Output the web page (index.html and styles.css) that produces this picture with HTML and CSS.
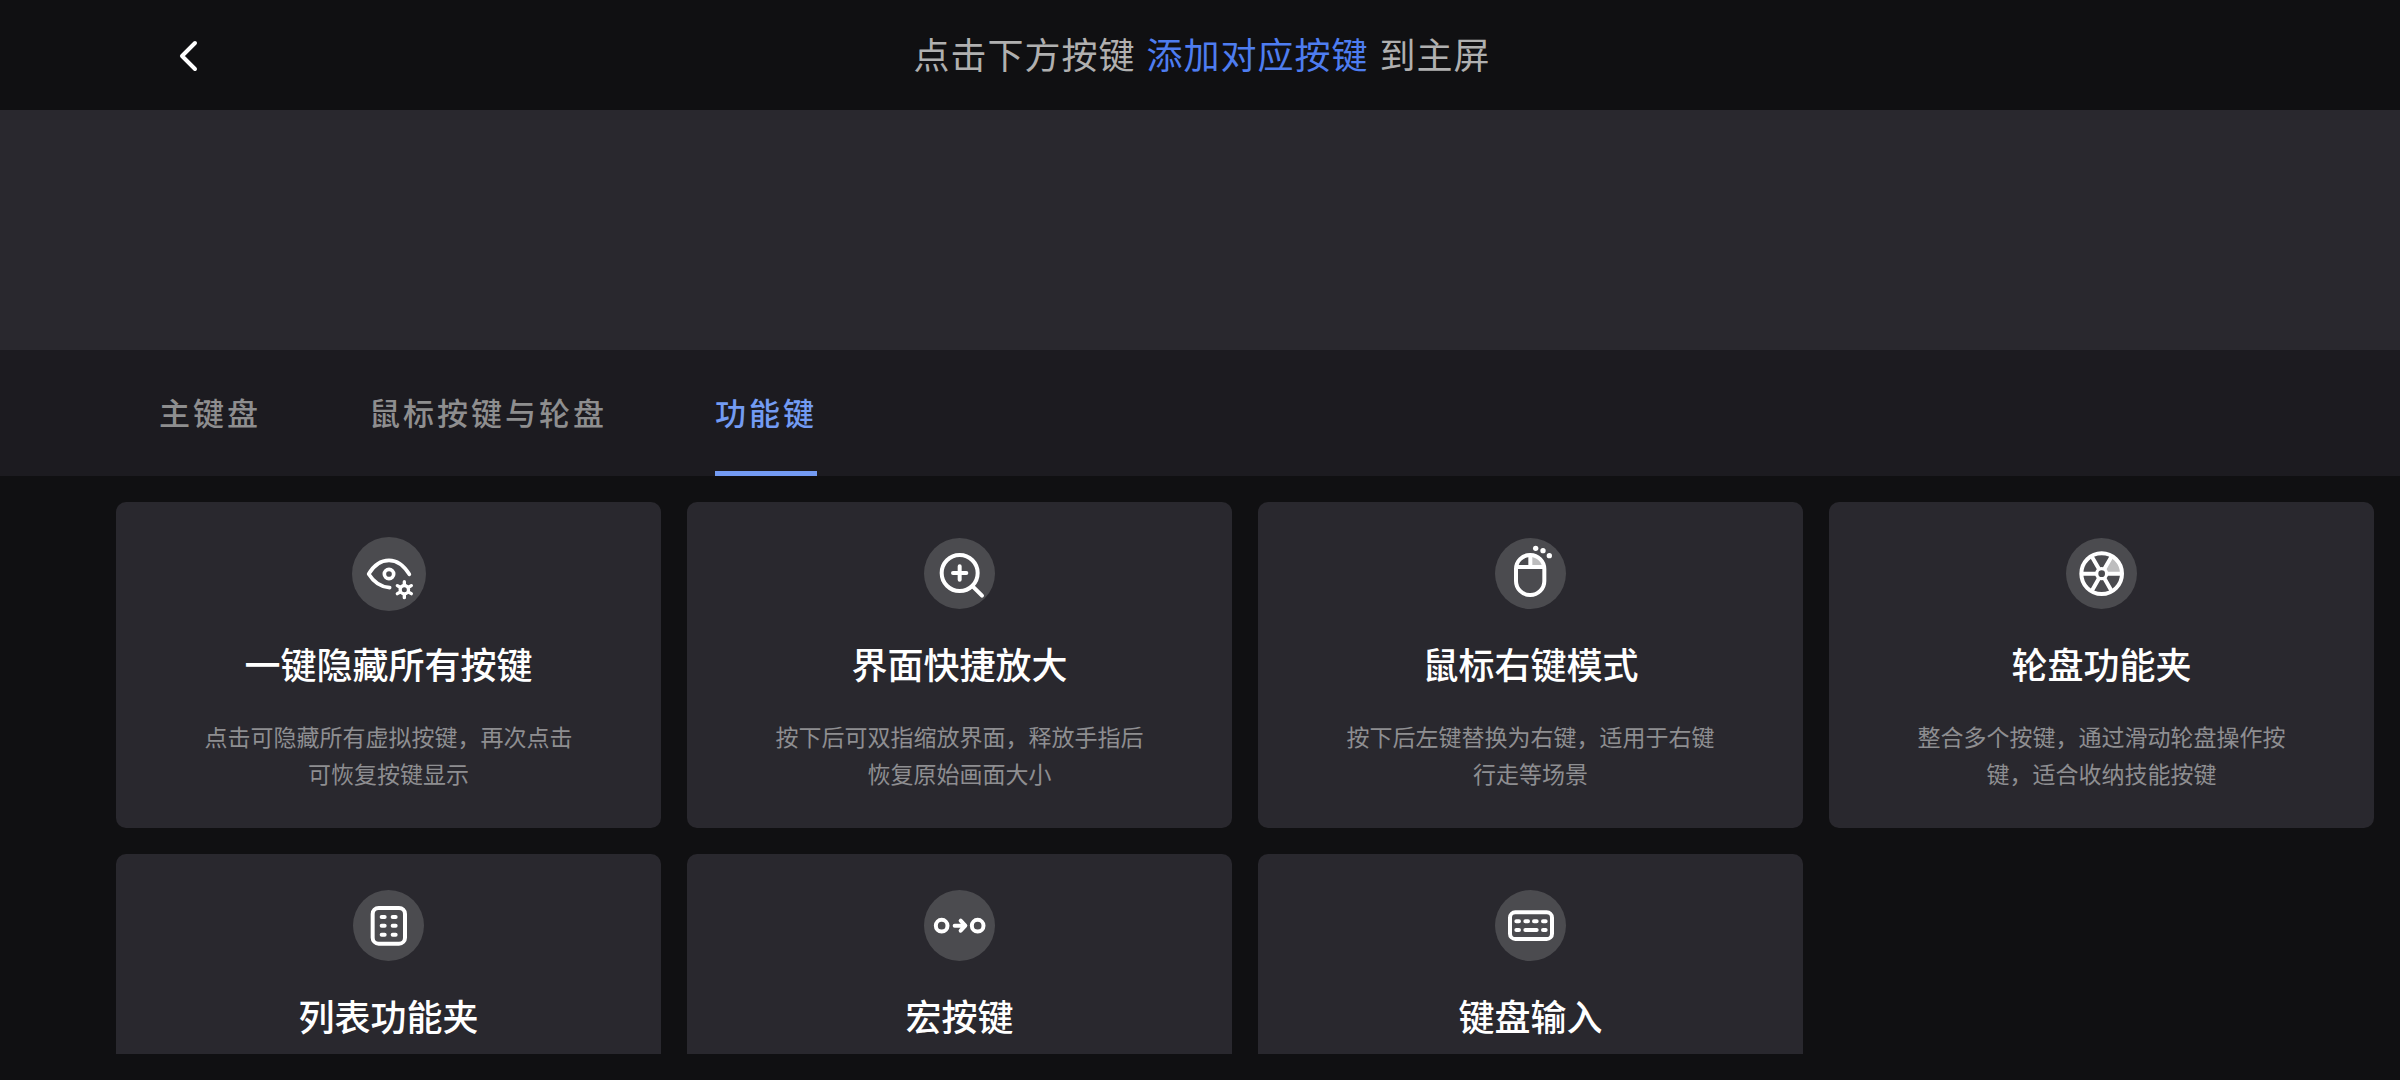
FILE: index.html
```html
<!DOCTYPE html>
<html lang="zh-CN">
<head>
<meta charset="utf-8">
<meta name="viewport" content="width=device-width, initial-scale=1">
<title>添加按键</title>
<link rel="stylesheet" href="styles.css">
</head>
<body>
<header class="topbar">
  <button class="back" type="button" aria-label="返回">
    <svg width="24" height="36" viewBox="0 0 24 36" fill="none" stroke="#fff" stroke-width="4" stroke-linecap="round" stroke-linejoin="round"><path d="M19 6 6 19l13 13"/></svg>
  </button>
  <h1 class="hint">点击下方按键 <span class="hint-accent">添加对应按键</span> 到主屏</h1>
</header>
<section class="preview" aria-label="主屏预览"></section>
<nav class="tabs" role="tablist">
  <button class="tab" type="button" role="tab" aria-selected="false">主键盘</button>
  <button class="tab" type="button" role="tab" aria-selected="false">鼠标按键与轮盘</button>
  <button class="tab tab-active" type="button" role="tab" aria-selected="true">功能键</button>
</nav>
<main class="panel">
  <div class="grid">
    <button class="card" type="button">
      <span class="icon icon-large">
        <svg viewBox="36 48 222 222" fill="none" stroke="#fff" stroke-width="11" stroke-linecap="round" stroke-linejoin="round">
          <path d="M208 160C192 134 170 118 147 118C121 118 100 135 86 159C101 183 120 198 149 200"/>
          <circle cx="147" cy="159" r="14"/>
          <circle cx="193" cy="206" r="12.500" stroke-width="10"/>
          <path stroke-width="10" d="M193 190v-8M193 222v8M179 198l-7-4M207 198l7-4M179 214l-7 4M207 214l7 4"/>
        </svg>
      </span>
      <span class="name">一键隐藏所有按键</span>
      <span class="desc">点击可隐藏所有虚拟按键，再次点击可恢复按键显示</span>
    </button>
    <button class="card" type="button">
      <span class="icon">
        <svg viewBox="45 54 213 213" fill="none" stroke="#fff" stroke-width="12" stroke-linecap="round">
          <circle cx="152" cy="159" r="54"/>
          <path d="M132 159h40M152 139v40M191 199l28 28"/>
        </svg>
      </span>
      <span class="name">界面快捷放大</span>
      <span class="desc">按下后可双指缩放界面，释放手指后恢复原始画面大小</span>
    </button>
    <button class="card" type="button">
      <span class="icon">
        <svg viewBox="45 54 213 213" fill="none" stroke="#fff" stroke-width="12">
          <path fill="#bdbdbe" stroke="none" d="M151 105c26 0 42 16 42 36h-42z"/>
          <rect x="108" y="105" width="85" height="120" rx="42"/>
          <path d="M108 141h85M151 105v36"/>
          <g fill="#fff" stroke="none"><circle cx="167" cy="85" r="8"/><circle cx="189" cy="92" r="8"/><circle cx="208" cy="107" r="8"/></g>
        </svg>
      </span>
      <span class="name">鼠标右键模式</span>
      <span class="desc">按下后左键替换为右键，适用于右键行走等场景</span>
    </button>
    <button class="card" type="button">
      <span class="icon">
        <svg viewBox="51 54 213 213" fill="none" stroke="#fff" stroke-width="12">
          <path fill="#bdbdbe" stroke="none" d="M158 161 189 107A62 62 0 0 1 220 161z"/>
          <circle cx="158" cy="161" r="61"/>
          <path d="M96 161h46M174 161h46M166 147 189 107M150 147 127 107M166 175 189 215M150 175 127 215"/>
          <circle cx="158" cy="161" r="15" fill="#4b4b4f" stroke-width="10"/>
        </svg>
      </span>
      <span class="name">轮盘功能夹</span>
      <span class="desc">整合多个按键，通过滑动轮盘操作按键，适合收纳技能按键</span>
    </button>
    <button class="card" type="button">
      <span class="icon">
        <svg viewBox="38 45 213 213" fill="none" stroke="#fff" stroke-width="12" stroke-linecap="round">
          <rect x="97" y="99" width="97" height="107" rx="18"/>
          <path d="M124 126h9M157 126h9M124 152h9M157 152h9M124 179h9M157 179h9"/>
        </svg>
      </span>
      <span class="name">列表功能夹</span>
    </button>
    <button class="card" type="button">
      <span class="icon">
        <svg viewBox="45 45 213 213" fill="none" stroke="#fff" stroke-width="12" stroke-linecap="round" stroke-linejoin="round">
          <circle cx="98" cy="152" r="17.500"/>
          <circle cx="206" cy="152" r="17.500"/>
          <path d="M137 152h30M155 137l14 15-14 15"/>
        </svg>
      </span>
      <span class="name">宏按键</span>
    </button>
    <button class="card" type="button">
      <span class="icon">
        <svg viewBox="45 45 213 213" fill="none" stroke="#fff" stroke-width="12" stroke-linecap="round">
          <rect x="90" y="112" width="126" height="80" rx="16"/>
          <path d="M109 139h8M136 139h8M162 139h8M189 139h8M109 165h8M136 165h34M189 165h8"/>
        </svg>
      </span>
      <span class="name">键盘输入</span>
    </button>
  </div>
</main>
</body>
</html>
```
FILE: styles.css
```css
* {
  box-sizing: border-box;
}

body {
  margin: 0;
  height: 100vh;
  display: flex;
  flex-direction: column;
  background: #101012;
  color: #fff;
  font-family: "Noto Sans CJK SC", "Noto Sans", sans-serif;
}

button {
  margin: 0;
  padding: 0;
  border: 0;
  background: none;
  color: inherit;
  font: inherit;
  cursor: pointer;
}

.topbar {
  flex: none;
  height: 110px;
  padding: 0 172px 0 176px;
  display: grid;
  grid-template-columns: 1fr auto 1fr;
  align-items: center;
}

.back {
  justify-self: start;
  display: flex;
}

.hint {
  margin: 0;
  padding-bottom: 4px;
  font-size: 36px;
  font-weight: 400;
  line-height: 48px;
  letter-spacing: 1px;
  color: #b0b0b0;
}

.hint-accent {
  margin: 0 2px;
  color: #4e7df0;
}

.preview {
  flex: none;
  height: 240px;
  background: #29282e;
}

.tabs {
  flex: none;
  height: 126px;
  padding: 0 159px;
  display: flex;
  gap: 108px;
  background: #1c1b20;
}

.tab {
  border-top: 1px solid transparent;
  border-bottom: 5px solid transparent;
  font-size: 31px;
  font-weight: 500;
  letter-spacing: 3px;
  color: #8e8e8f;
}

.tab-active {
  border-bottom-color: #739bf3;
  color: #739bf3;
}

.panel {
  flex: 1;
  min-height: 0;
  margin: 26px 26px 26px 116px;
  overflow-y: auto;
  scrollbar-width: none;
}

.grid {
  display: grid;
  grid-template-columns: repeat(4, 1fr);
  grid-auto-rows: 1fr;
  gap: 26px;
}

.card {
  padding: 36px 24px;
  display: flex;
  flex-direction: column;
  align-items: center;
  border-radius: 10px;
  background: #29282e;
}

.icon {
  height: 71px;
  display: flex;
  align-items: center;
}

.icon svg {
  flex: none;
  width: 71px;
  height: 71px;
  border-radius: 50%;
  background: #4b4b4f;
}

.icon-large svg {
  width: 74px;
  height: 74px;
}

.name {
  margin-top: 30px;
  font-size: 36px;
  font-weight: 500;
  line-height: 48px;
}

.desc {
  margin-top: 31px;
  max-width: 380px;
  font-size: 23px;
  line-height: 37px;
  color: #8e8e91;
}
```
